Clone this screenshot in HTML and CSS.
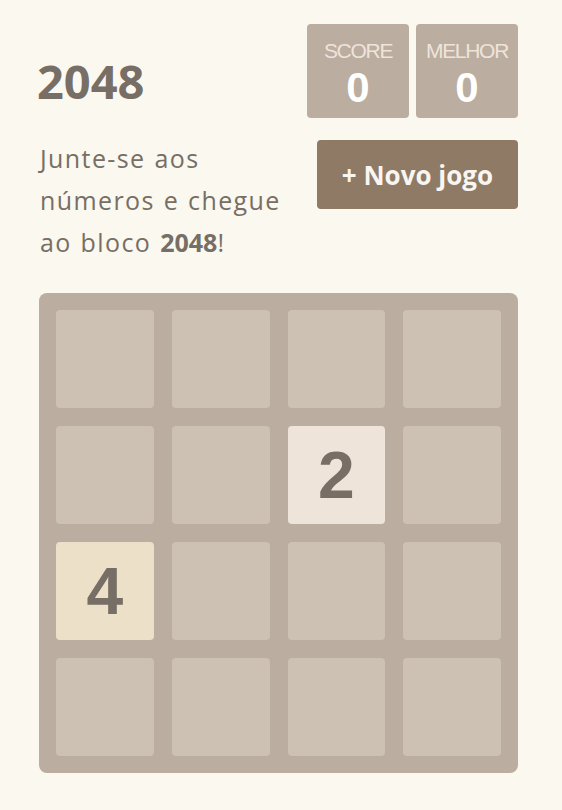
FILE: index.html
```html
<!DOCTYPE html>
<html lang="pt">
  <head>
    <meta charset="UTF-8" />
    <meta name="viewport" content="width=device-width, initial-scale=1.0" />
    <title>2048</title>
    <link rel="stylesheet" href="styles.css">
  </head>
  <body>
    <div class="container">
      <div class="heading">
        <h1 class="title">2048</h1>
        <div class="scores">
          <div class="score-box">
            <span class="label">SCORE</span>
            <span class="value">0</span>
          </div>
          <div class="score-box">
            <span class="label">MELHOR</span>
            <span class="value">0</span>
          </div>
        </div>
      </div>
      <div class="intro">
        <p class="intro-text">
          <span class="line">Junte-se aos</span>
          <span class="line">números e chegue</span>
          <span class="line">ao bloco <strong>2048</strong>!</span>
        </p>
        <a class="new-game" href="#">+ Novo jogo</a>
      </div>
      <div class="board">
        <div class="cell"></div>
        <div class="cell"></div>
        <div class="cell"></div>
        <div class="cell"></div>
        <div class="cell"></div>
        <div class="cell"></div>
        <div class="cell tile-2">2</div>
        <div class="cell"></div>
        <div class="cell tile-4">4</div>
        <div class="cell"></div>
        <div class="cell"></div>
        <div class="cell"></div>
        <div class="cell"></div>
        <div class="cell"></div>
        <div class="cell"></div>
        <div class="cell"></div>
      </div>
    </div>
  </body>
</html>
```

FILE: styles.css
```css
body {
  margin: 0;
  background: #faf8ef;
  color: #776e65;
  font-family: "Open Sans", "DejaVu Sans", sans-serif;
}
.container {
  width: 479px;
  margin-left: 39px;
  padding-top: 24px;
}
.heading {
  display: flex;
  justify-content: space-between;
  align-items: flex-start;
}
.title {
  margin: 27px 0 0 -2px;
  font-size: 47px;
  line-height: 60px;
  font-weight: 700;
}
.scores {
  display: flex;
  gap: 7px;
}
.score-box {
  display: flex;
  flex-direction: column;
  align-items: center;
  width: 102px;
  height: 94px;
  padding-top: 16px;
  box-sizing: border-box;
  background: #bbada0;
  border-radius: 4px;
  font-family: "Liberation Sans", Arial, sans-serif;
}
.score-box .label {
  font-size: 21px;
  line-height: 22px;
  letter-spacing: -1.3px;
  color: #eee4da;
}
.score-box .value {
  margin-top: 4px;
  font-size: 42px;
  line-height: 44px;
  font-weight: 700;
  color: #fff;
}
.intro {
  display: flex;
  justify-content: space-between;
  align-items: flex-start;
  margin-top: 19px;
}
.intro-text {
  margin: 0 0 0 1px;
  width: 255px;
  font-size: 25px;
  line-height: 42px;
  word-spacing: 1px;
  letter-spacing: 1.4px;
}
.intro-text .line {
  display: block;
}
.intro-text strong {
  font-weight: 700;
  letter-spacing: 0;
}
.new-game {
  display: flex;
  align-items: center;
  justify-content: center;
  width: 201px;
  height: 69px;
  margin-top: 3px;
  background: #8f7a66;
  border-radius: 4px;
  color: #f9f6f2;
  font-size: 26px;
  font-weight: 700;
  text-decoration: none;
}
.board {
  display: grid;
  grid-template-columns: repeat(4, 1fr);
  grid-auto-rows: 98px;
  gap: 18px;
  margin-top: 30px;
  padding: 17px;
  background: #bbada0;
  border-radius: 8px;
}
.cell {
  display: flex;
  align-items: center;
  justify-content: center;
  background: #cdc1b4;
  border-radius: 4px;
  font-family: "Liberation Sans", Arial, sans-serif;
  font-size: 66px;
  font-weight: 700;
  color: #776e65;
}
.tile-2 {
  background: #eee4da;
}
.tile-4 {
  background: #ede0c8;
}
```
